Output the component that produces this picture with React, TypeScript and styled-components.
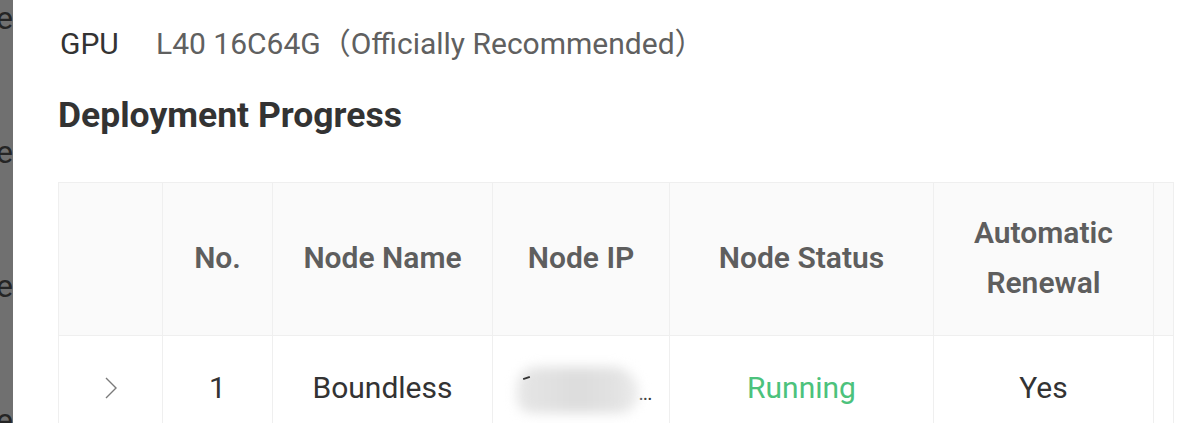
import React from "react";
import styled, { createGlobalStyle } from "styled-components";

const Global = createGlobalStyle`
  html, body {
    margin: 0;
    padding: 0;
    width: 1200px;
    height: 423px;
    overflow: hidden;
    background: #ffffff;
    font-family: Roboto, "Noto Sans", "Noto Sans CJK SC", sans-serif;
  }
  * { box-sizing: border-box; }
`;

const Page = styled.div`
  display: flex;
  width: 1200px;
  height: 423px;
  overflow: hidden;
`;

const Mask = styled.div`
  flex: 0 0 13px;
  width: 13px;
  background: #707070;
  overflow: hidden;
  display: flex;
  flex-direction: column;
  gap: 104px;
  padding-top: 3px;
`;

const MaskLine = styled.div`
  display: flex;
  justify-content: flex-end;
  white-space: nowrap;
  font-family: Roboto, sans-serif;
  font-size: 32px;
  line-height: 30px;
  color: #252525;
`;

const Drawer = styled.div`
  flex: 1;
  padding: 24px 26px 0 45px;
  display: flex;
  flex-direction: column;
`;

const InfoRow = styled.div`
  display: flex;
  align-items: center;
  padding-left: 2px;
  font-size: 30px;
  line-height: 40px;
`;

const InfoLabel = styled.span`
  width: 96px;
  color: #333333;
`;

const InfoValue = styled.span`
  color: #606060;
`;

const Title = styled.h2`
  margin: 29px 0 0 0;
  font-size: 35.5px;
  line-height: 44px;
  font-weight: 700;
  color: #333333;
`;

const Table = styled.table`
  margin-top: 45px;
  border-collapse: separate;
  border-spacing: 0;
  table-layout: fixed;
  width: 1116px;
  border-top: 1px solid #efefef;
  border-left: 1px solid #efefef;
`;

const Th = styled.th`
  height: 153px;
  padding: 0 16px 3px;
  background: #fafafa;
  border-right: 1px solid #efefef;
  border-bottom: 1px solid #efefef;
  font-size: 30px;
  line-height: 50px;
  font-weight: 600;
  color: #5e5e5e;
  text-align: center;
  vertical-align: middle;
`;

const Td = styled.td<{ $tone?: "green" }>`
  height: 106px;
  padding: 0 8px 2px;
  border-right: 1px solid #efefef;
  border-bottom: 1px solid #efefef;
  font-size: 30px;
  line-height: 42px;
  color: ${(p) => (p.$tone === "green" ? "#4cc27c" : "#333333")};
  text-align: center;
  vertical-align: middle;
  white-space: nowrap;
`;

const Chevron = styled.svg`
  display: inline-block;
  vertical-align: middle;
  margin-top: -4px;
`;

const Ip = styled.span`
  display: inline-flex;
  align-items: flex-end;
  vertical-align: top;
  height: 42px;
  transform: translateX(3px);
`;

const Blur = styled.span`
  position: relative;
  display: inline-block;
  width: 122px;
  height: 42px;
`;

const BlurBlob = styled.span`
  position: absolute;
  left: 0;
  right: 0;
  top: 0;
  bottom: -4px;
  border-radius: 30px 40px 30px 22px;
  background: linear-gradient(90deg, #e6e6e6 0%, #dcdcdc 50%, #e2e2e2 80%, #ececec 100%);
  filter: blur(6px);
`;

const Dash = styled.span`
  position: absolute;
  left: 6px;
  top: 10px;
  width: 7px;
  height: 2px;
  background: #333;
  transform: rotate(-18deg);
`;

const Dots = styled.span`
  font-size: 20px;
  line-height: 32px;
  color: #333;
  letter-spacing: -1px;
`;

export default function App() {
  return (
    <Page>
      <Global />
      <Mask>
        <MaskLine>e</MaskLine>
        <MaskLine>re</MaskLine>
        <MaskLine>re</MaskLine>
        <MaskLine>re</MaskLine>
      </Mask>
      <Drawer>
        <InfoRow>
          <InfoLabel>GPU</InfoLabel>
          <InfoValue>L40 16C64G（Officially Recommended）</InfoValue>
        </InfoRow>
        <Title>Deployment Progress</Title>
        <Table>
          <colgroup>
            <col style={{ width: 104 }} />
            <col style={{ width: 110 }} />
            <col style={{ width: 220 }} />
            <col style={{ width: 177 }} />
            <col style={{ width: 264 }} />
            <col style={{ width: 220 }} />
            <col style={{ width: 20 }} />
          </colgroup>
          <thead>
            <tr>
              <Th />
              <Th>No.</Th>
              <Th>Node Name</Th>
              <Th>Node IP</Th>
              <Th>Node Status</Th>
              <Th>Automatic Renewal</Th>
              <Th style={{ padding: 0 }} />
            </tr>
          </thead>
          <tbody>
            <tr>
              <Td>
                <Chevron width="14" height="24" viewBox="0 0 14 24">
                  <polyline
                    points="2,2 12,12 2,22"
                    fill="none"
                    stroke="#7a7a7a"
                    strokeWidth="1.4"
                  />
                </Chevron>
              </Td>
              <Td>1</Td>
              <Td>Boundless</Td>
              <Td>
                <Ip>
                  <Blur>
                    <BlurBlob />
                    <Dash />
                  </Blur>
                  <Dots>...</Dots>
                </Ip>
              </Td>
              <Td $tone="green">Running</Td>
              <Td>Yes</Td>
              <Td style={{ padding: 0 }} />
            </tr>
          </tbody>
        </Table>
      </Drawer>
    </Page>
  );
}
